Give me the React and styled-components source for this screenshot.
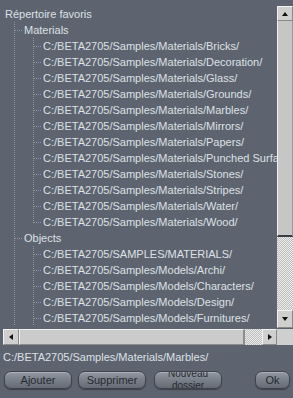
import styled, { createGlobalStyle } from "styled-components";

const GlobalStyle = createGlobalStyle`
  html, body {
    margin: 0;
    padding: 0;
    background: #5d6470;
  }
  body {
    font-family: "Liberation Sans", Arial, sans-serif;
  }
`;

const LINE = "#8f969f";

const Page = styled.div`
  width: 293px;
  height: 398px;
  display: flex;
  flex-direction: column;
  background: #5d6470;
  overflow: hidden;
`;

const Frame = styled.div`
  margin-top: 6px;
  display: flex;
  flex-direction: column;
`;

const Body = styled.div`
  display: flex;
  height: 322px;
`;

const Tree = styled.div`
  width: 277px;
  overflow: hidden;
  display: flex;
  flex-direction: column;
`;

const Row = styled.div`
  flex: 0 0 16px;
  display: flex;
  align-items: center;
  padding-left: 5px;
  white-space: nowrap;
  font-size: 11px;
  color: #dde1e5;
`;

const Guide = styled.span`
  flex: 0 0 19px;
  height: 16px;
  background-repeat: no-repeat;
  background-image: ${({ $kind }) =>
    $kind === "pipe"
      ? `repeating-linear-gradient(to bottom, ${LINE} 0 1px, transparent 1px 2px)`
      : `repeating-linear-gradient(to bottom, ${LINE} 0 1px, transparent 1px 2px),
         repeating-linear-gradient(to right, ${LINE} 0 1px, transparent 1px 2px)`};
  background-position: 9px 0, 10px 8px;
  background-size: ${({ $kind }) =>
    $kind === "elbow" ? "1px 9px, 8px 1px" : "1px 100%, 8px 1px"};
`;

const VScroll = styled.div`
  width: 16px;
  display: flex;
  flex-direction: column;
  background: #c4c4c4;
`;

const ArrowButton = styled.div`
  flex: 0 0 ${({ $size }) => $size}px;
  display: flex;
  align-items: center;
  justify-content: center;
  background: #cfcfcf;
  border-top: 1px solid #f2f2f2;
  border-left: 1px solid #f2f2f2;
  border-right: 1px solid #8a8a8a;
  border-bottom: 1px solid #8a8a8a;
  box-sizing: border-box;
`;

const VThumb = styled.div`
  flex: 0 0 216px;
  background: #c6c6c6;
  border-left: 1px solid #f0f0f0;
  border-right: 1px solid #9a9a9a;
  border-bottom: 2px solid #3a3d42;
  box-sizing: border-box;
`;

const Dither = styled.div`
  flex: 1;
  background-color: #d6d6d6;
  background-image: repeating-conic-gradient(#bdbdbd 0 25%, #ececec 0 50%);
  background-size: 2px 2px;
`;

const HScroll = styled.div`
  height: 16px;
  margin-top: 1px;
  display: flex;
  background: #c4c4c4;
`;

const HLeftPad = styled.div`
  flex: 0 0 3px;
  background: #5d6470;
`;

const HThumb = styled.div`
  flex: 0 0 226px;
  background: #cbcbcb;
  border-top: 1px solid #f0f0f0;
  border-left: 1px solid #f0f0f0;
  border-right: 2px solid #8c8c8c;
  border-bottom: 1px solid #8c8c8c;
  box-sizing: border-box;
`;

const Corner = styled.div`
  flex: 0 0 16px;
  background: #cfcfcf;
`;

const PathLine = styled.div`
  margin-top: 6px;
  height: 12px;
  padding-left: 3px;
  font-size: 11px;
  line-height: 12px;
  color: #dde1e5;
  white-space: nowrap;
`;

const Buttons = styled.div`
  margin-top: 8px;
  display: flex;
  align-items: center;
  padding-left: 4px;
`;

const Button = styled.div`
  width: ${({ $w }) => $w}px;
  height: 18px;
  margin-right: ${({ $gap }) => $gap || 0}px;
  box-sizing: border-box;
  border-radius: 7px;
  border: 1px solid #3e434b;
  background: linear-gradient(to bottom, #9299a3 0%, #7b828c 45%, #646b75 100%);
  box-shadow: inset 0 1px 0 rgba(255, 255, 255, 0.25), 0 1px 1px rgba(0, 0, 0, 0.35);
  display: flex;
  align-items: center;
  justify-content: center;
  text-align: center;
  overflow: hidden;
  font-size: ${({ $small }) => ($small ? 10 : 11)}px;
  line-height: ${({ $small }) => ($small ? "12px" : "16px")};
  color: #262a30;
`;

function Arrow({ dir }) {
  const pts = {
    up: "1,5 4,1 7,5",
    down: "1,1 4,5 7,1",
    left: "5,1 1,4 5,7",
    right: "1,1 5,4 1,7",
  }[dir];
  const horiz = dir === "left" || dir === "right";
  return (
    <svg width={horiz ? 6 : 8} height={horiz ? 8 : 6} viewBox={horiz ? "0 0 6 8" : "0 0 8 6"}>
      <polygon points={pts} fill="#111" />
    </svg>
  );
}

const base = "C:/BETA2705/Samples/";

const rows = [
  { g: [], t: "Répertoire favoris" },
  { g: ["tee"], t: "Materials" },
  ...["Bricks", "Decoration", "Glass", "Grounds", "Marbles", "Mirrors", "Papers", "Punched Surfaces", "Stones", "Stripes", "Water", "Wood"].map(
    (n, i, a) => ({ g: ["pipe", i === a.length - 1 ? "elbow" : "tee"], t: `${base}Materials/${n}/` })
  ),
  { g: ["tee"], t: "Objects" },
  { g: ["pipe", "tee"], t: "C:/BETA2705/SAMPLES/MATERIALS/" },
  ...["Archi", "Characters", "Design", "Furnitures"].map((n) => ({
    g: ["pipe", "tee"],
    t: `${base}Models/${n}/`,
  })),
];

export default function App() {
  return (
    <Page>
      <GlobalStyle />
      <Frame>
        <Body>
          <Tree>
            {rows.map((r, i) => (
              <Row key={i}>
                {r.g.map((k, j) => (
                  <Guide key={j} $kind={k} />
                ))}
                {r.t}
              </Row>
            ))}
          </Tree>
          <VScroll>
            <ArrowButton $size={15}>
              <Arrow dir="up" />
            </ArrowButton>
            <VThumb />
            <Dither />
            <ArrowButton $size={18}>
              <Arrow dir="down" />
            </ArrowButton>
          </VScroll>
        </Body>
        <HScroll>
          <HLeftPad />
          <ArrowButton $size={16}>
            <Arrow dir="left" />
          </ArrowButton>
          <HThumb />
          <Dither />
          <ArrowButton $size={15}>
            <Arrow dir="right" />
          </ArrowButton>
          <Corner />
        </HScroll>
      </Frame>
      <PathLine>C:/BETA2705/Samples/Materials/Marbles/</PathLine>
      <Buttons>
        <Button $w={68} $gap={6}>Ajouter</Button>
        <Button $w={68} $gap={8}>Supprimer</Button>
        <Button $w={68} $gap={33} $small>
          Nouveau dossier
        </Button>
        <Button $w={35}>Ok</Button>
      </Buttons>
    </Page>
  );
}
